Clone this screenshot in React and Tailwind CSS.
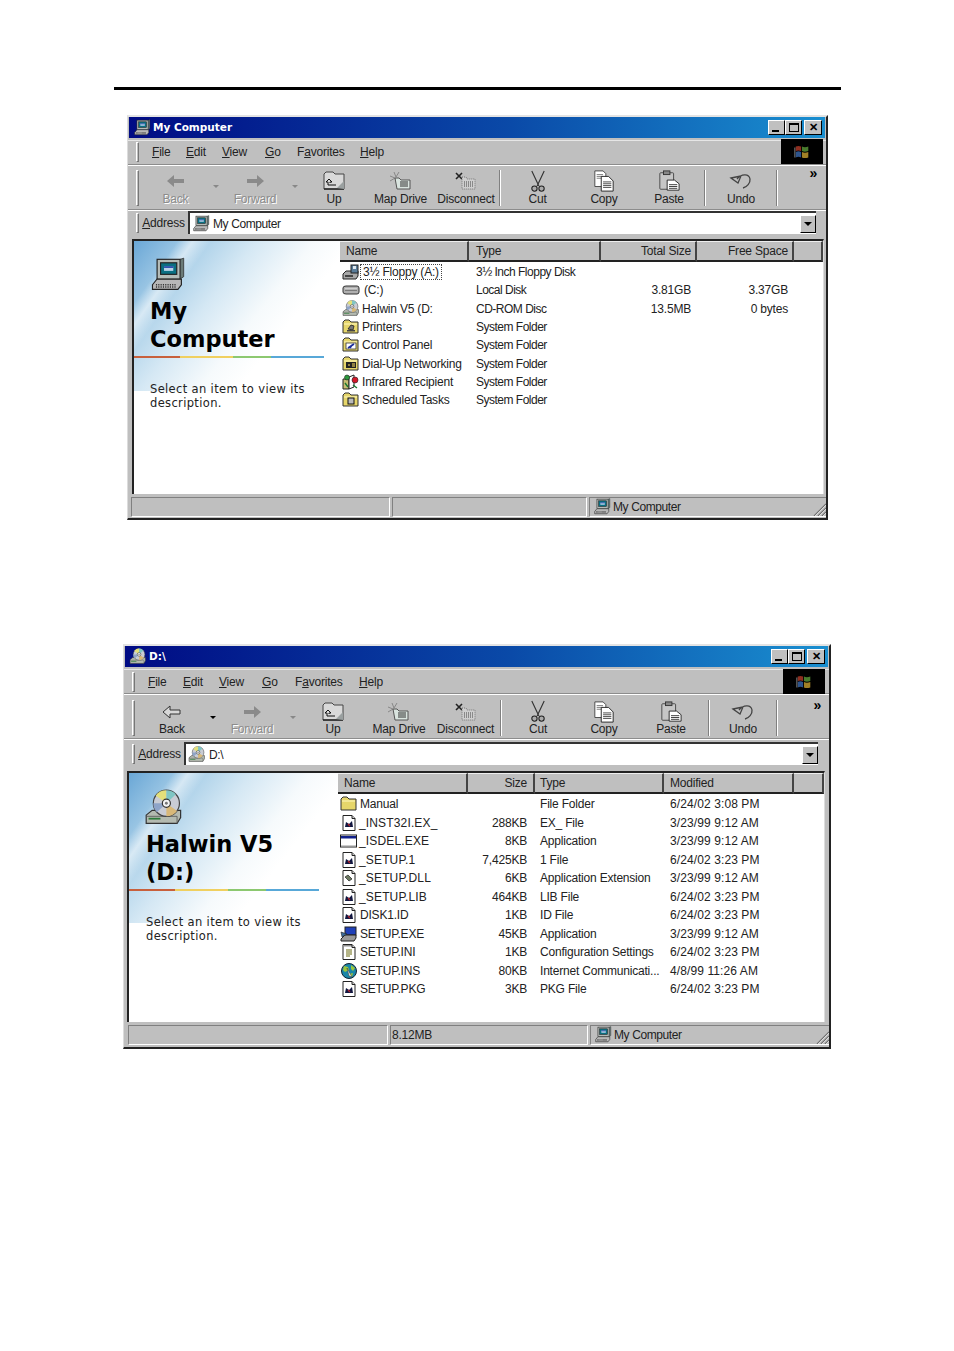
import React from "react";

const Computer = ({ className }) => (
  <svg viewBox="0 0 32 32" className={className}>
    <path d="M3 24l4-5h21v5l-3 4H3z" fill="#b8b8b8" stroke="#222" strokeWidth="1" />
    <path d="M6 26h17M6 24h17" stroke="#333" strokeWidth="1.4" strokeDasharray="1 1" />
    <rect x="7" y="2" width="20" height="17" fill="#b5bcb8" stroke="#222" />
    <path d="M27 2l3-1v16l-3 2z" fill="#6b7b78" stroke="#222" strokeWidth=".6" />
    <rect x="10" y="5" width="14" height="10" fill="#0a6f82" stroke="#222" />
    <rect x="13" y="8" width="8" height="4" fill="#b9d3e8" />
    <rect x="13" y="8" width="8" height="1.4" fill="#1c3fa8" />
  </svg>
);

const Cd = ({ className }) => (
  <svg viewBox="0 0 32 32" className={className}>
    <path d="M1 22l5-4h24v6l-3 5H1z" fill="#b4bab0" stroke="#333" />
    <path d="M3 25h10" stroke="#2d7a3a" strokeWidth="1.500" />
    <path d="M1 23h26v6" fill="none" stroke="#555" strokeWidth=".7" />
    <circle cx="18" cy="12" r="11" fill="#c9ccd4" stroke="#444" />
    <path d="M18 12L9 5.500A11 11 0 0 1 18 1z" fill="#e4e07a" />
    <path d="M18 12l0-11a11 11 0 0 1 8 3.500z" fill="#7fc6c4" />
    <path d="M18 12l9 6.500A11 11 0 0 1 18 23z" fill="#d8b878" />
    <path d="M18 12L7 12a11 11 0 0 0 3 7.500z" fill="#8ea4c8" />
    <circle cx="18" cy="12" r="3.400" fill="#f4f4f4" stroke="#333" />
    <circle cx="18" cy="12" r="1.200" fill="#777" />
  </svg>
);

const Floppy = () => (
  <svg viewBox="0 0 18 16" className="w-[18px] h-[16px]">
    <path d="M1 10l3-3h12v5l-2 3H1z" fill="#a8a8a8" stroke="#222" />
    <path d="M3 12h8" stroke="#111" strokeWidth="1.300" />
    <rect x="9" y="1" width="7" height="8" fill="#5a7d9a" stroke="#222" />
    <rect x="11" y="2" width="3" height="3" fill="#dfe8ee" />
  </svg>
);

const Drive = () => (
  <svg viewBox="0 0 18 16" className="w-[18px] h-[16px]">
    <path d="M1 6q0-2 3-2h11q2 0 2 2v4q0 2-2 2H4q-3 0-3-2z" fill="#b0b0b0" stroke="#333" />
    <path d="M3 7h12v2H3z" fill="#7b7b7b" />
    <path d="M3 7h12" stroke="#eee" />
  </svg>
);

const Folder = ({ inner }) => (
  <svg viewBox="0 0 18 16" className="w-[18px] h-[16px]">
    <path d="M1 14V3l2-2h4l2 2h7v11z" fill="#e6d66a" stroke="#333" />
    <path d="M2 5h13" stroke="#fff8c0" />
    {inner === "print" && (<><path d="M6 10l3-4 3 1-1 4z" fill="#777" stroke="#222" strokeWidth=".8" /><path d="M5 11h8v1.500H5z" fill="#444" /></>)}
    {inner === "cp" && (<><rect x="4" y="6" width="10" height="6" fill="#fff" stroke="#333" strokeWidth=".8" /><path d="M6 11l6-4M8 11l2-3" stroke="#1a2c9a" strokeWidth="1.600" /></>)}
    {inner === "dial" && (<><rect x="4" y="6" width="10" height="6" fill="#222" /><path d="M6 9h2M10 8h3M10 10h3" stroke="#ffe060" strokeWidth="1.200" /></>)}
    {inner === "task" && (<rect x="6" y="6" width="6" height="6" fill="#bbb" stroke="#111" />)}
  </svg>
);

const Infrared = () => (
  <svg viewBox="0 0 18 16" className="w-[18px] h-[16px]">
    <path d="M1 5h6v10H1z" fill="#c6bd73" stroke="#222" />
    <path d="M7 3l5-2v12l-5 2z" fill="#fff" stroke="#222" />
    <circle cx="13" cy="6" r="3" fill="#d2182a" stroke="#222" strokeWidth=".6" />
    <circle cx="5" cy="3.500" r="2.500" fill="#2b9a3d" stroke="#222" strokeWidth=".6" />
    <path d="M3 9l3 4M11 11l4 3" stroke="#1b7a30" strokeWidth="1.400" />
  </svg>
);

const Doc = ({ mark = "dark" }) => (
  <svg viewBox="0 0 18 16" className="w-[18px] h-[16px]">
    <path d="M3 .5h9l3 3v12H3z" fill="#fff" stroke="#222" />
    <path d="M12 .5v3h3" fill="#ccc" stroke="#222" />
    {mark === "dark" && (<><path d="M5 12l1-5 3 2 3-3 1 6z" fill="#10163f" /><path d="M8 9l2 2" stroke="#b0202a" strokeWidth="1.200" /></>)}
    {mark === "dll" && <path d="M5 7l3-2 4 4-3 2z" fill="#6d7a62" stroke="#222" strokeWidth=".7" />}
    {mark === "ini" && (<><path d="M5 1v1.500M7 1v1.500M9 1v1.500M11 1v1.500" stroke="#222" /><path d="M6 6h6M6 8h6M6 10h6M6 12h4" stroke="#6a6a10" strokeWidth="1.200" /></>)}
  </svg>
);

const AppWin = () => (
  <svg viewBox="0 0 18 16" className="w-[18px] h-[16px]">
    <rect x=".5" y="2" width="16" height="12" fill="#fff" stroke="#222" />
    <rect x="1" y="3" width="15" height="2.500" fill="#11208a" />
    <path d="M1 13h15" stroke="#999" />
  </svg>
);

const SetupExe = () => (
  <svg viewBox="0 0 18 16" className="w-[18px] h-[16px]">
    <rect x="5" y="1" width="11" height="8" fill="#2040b8" stroke="#222" />
    <path d="M1 13l4-4h11v3l-2 3H1z" fill="#999" stroke="#222" />
    <path d="M1 6l6 2-5 3z" fill="#3a6a9a" stroke="#222" strokeWidth=".6" />
  </svg>
);

const Globe = () => (
  <svg viewBox="0 0 18 16" className="w-[18px] h-[16px]">
    <circle cx="9" cy="8" r="7.500" fill="#1a86a8" stroke="#123" />
    <path d="M4 3l4 1 1 3-4 2-2-2zM11 2l4 3-2 3-2-2zM9 11l4-1-1 4z" fill="#9cc63c" />
    <path d="M7 5l5 9-3-1z" fill="#e8e8e8" stroke="#333" strokeWidth=".5" />
  </svg>
);

const BackArrow = ({ on }) => (
  <svg viewBox="0 0 22 18" className="w-[22px] h-[18px]">
    {on ? (
      <path d="M9 3L2 9l7 6v-4h10V7H9z" fill="#d8d8d8" stroke="#333" strokeWidth="1" />
    ) : (
      <path d="M9 3L2 9l7 6v-4h10V7H9z" fill="#8a8a8a" />
    )}
  </svg>
);
const FwdArrow = () => (
  <svg viewBox="0 0 22 18" className="w-[22px] h-[18px]">
    <path d="M13 3l7 6-7 6v-4H3V7h10z" fill="#8a8a8a" />
  </svg>
);
const UpIco = () => (
  <svg viewBox="0 0 24 20" className="w-[24px] h-[20px]">
    <path d="M2 18V3l2-2h7l2 2h9v15z" fill="#d9d9d9" stroke="#444" />
    <path d="M2 18h20" stroke="#222" strokeWidth="1.400" />
    <path d="M7 8l-3 3h2v3h8M7 8l3 3H8v1" fill="none" stroke="#111" strokeWidth="1" />
    <path d="M15 17l7-7v8z" fill="#9aa0a0" />
  </svg>
);
const MapIco = () => (
  <svg viewBox="0 0 24 20" className="w-[24px] h-[20px]">
    <path d="M5 1l2 5M1 5l5 2M10 1L7 6M1 10l5-3" stroke="#888" strokeWidth="1" />
    <path d="M6 7h4l2 2h9v9H8z" fill="#d9e4df" stroke="#555" />
    <path d="M11 11h8M11 13h8M11 15h8" stroke="#333" />
  </svg>
);
const DiscIco = () => (
  <svg viewBox="0 0 24 20" className="w-[24px] h-[20px]">
    <path d="M2 2l6 6M8 2L2 8" stroke="#222" strokeWidth="1.600" />
    <path d="M8 6h4l1 2h8v10H8z" fill="#cfcfcf" stroke="#777" strokeDasharray="1 1" />
    <path d="M10 11h10M10 13h10M10 15h10" stroke="#444" strokeDasharray="1 1" />
  </svg>
);
const CutIco = () => (
  <svg viewBox="0 0 20 26" className="w-[18px] h-[23px]">
    <path d="M3 1l8 17M17 1L9 18" stroke="#333" strokeWidth="1.300" fill="none" />
    <circle cx="6" cy="21" r="3" fill="#aaa" stroke="#222" strokeWidth="1.200" />
    <circle cx="14" cy="21" r="3" fill="#aaa" stroke="#222" strokeWidth="1.200" />
  </svg>
);
const CopyIco = () => (
  <svg viewBox="0 0 24 24" className="w-[22px] h-[22px]">
    <path d="M2 1h9l3 3v14H2z" fill="#fff" stroke="#444" />
    <path d="M4 5h7M4 7h7M4 9h7" stroke="#777" />
    <path d="M9 7h8l5 5v11H9z" fill="#fff" stroke="#222" />
    <path d="M11 13h9M11 15h9M11 17h9M11 19h9" stroke="#444" />
  </svg>
);
const PasteIco = () => (
  <svg viewBox="0 0 24 24" className="w-[22px] h-[22px]">
    <rect x="2" y="3" width="15" height="18" rx="1" fill="#c6c6c6" stroke="#444" />
    <rect x="6" y="1" width="7" height="4" fill="#888" stroke="#333" />
    <path d="M10 11h8l5 4v7H10z" fill="#fff" stroke="#222" />
    <path d="M12 16h9M12 18h9M12 20h9" stroke="#333" />
  </svg>
);
const UndoIco = () => (
  <svg viewBox="0 0 24 20" className="w-[24px] h-[20px]">
    <path d="M2 7l10-2-3 7zM8 8c4-5 12-6 13 0 .5 4-3 8-7 9" fill="none" stroke="#444" strokeWidth="1.300" />
  </svg>
);

const Flag = () => (
  <svg viewBox="0 0 20 20" className="w-[18px] h-[18px] opacity-80">
    <path d="M3 4q3-1.500 6 0v5q-3-1.500-6 0z" fill="#b23a28" />
    <path d="M10 4q3 1.500 7 0v5q-4 1.500-7 0z" fill="#5a9a3a" />
    <path d="M3 10q3-1.500 6 0v6q-3-1.500-6 0z" fill="#3a6ab0" />
    <path d="M10 10q3 1.500 7 0v6q-4 1.500-7 0z" fill="#c8a030" />
    <path d="M2 5v11" stroke="#777" strokeWidth="1.500" />
  </svg>
);

const U = ({ children }) => <span className="underline underline-offset-1">{children}</span>;

const Grip = ({ h }) => (
  <div className={`w-[3px] shrink-0 border-l border-t border-white border-r border-b border-r-[#777] border-b-[#777] ${h}`} />
);

const Sep = () => <div className="w-[2px] h-[36px] shrink-0 border-l border-[#808080] border-r border-r-white" />;

const TBtn = ({ w, label, disabled, children }) => (
  <div className={`flex flex-col items-center justify-between h-[36px] shrink-0 ${w}`}>
    <div className="h-[23px] flex items-center justify-center">{children}</div>
    <span className={`leading-[13px] whitespace-nowrap ${disabled ? "text-[#8c8c8c] [text-shadow:1px_1px_0_#fff]" : ""}`}>{label}</span>
  </div>
);

const Drop = ({ w, dark }) => (
  <div className={`shrink-0 flex justify-center pb-[2px] ${w}`}>
    <div className={`w-0 h-0 border-x-[3px] border-x-transparent border-t-[3px] ${dark ? "border-t-black" : "border-t-[#888]"}`} />
  </div>
);

const WinBtn = ({ children, className = "" }) => (
  <div className={`w-[17px] h-[15px] bg-[#c0c0c0] border border-t-white border-l-white border-r-black border-b-black flex items-center justify-center ${className}`}>
    {children}
  </div>
);

const SKY =
  "bg-no-repeat bg-[size:100%_150px] bg-[linear-gradient(125deg,transparent_0%,transparent_14%,rgba(255,255,255,.55)_19%,transparent_25%,transparent_100%),linear-gradient(128deg,#6aa7d6_0%,#a9cfe8_20%,#d5e8f4_38%,#f6fafc_56%,#ffffff_68%)]";

function Window({ cfg }) {
  return (
    <div className={`bg-[#bfbfbf] border-t-2 border-l border-t-[#e4e4e4] border-l-[#dcdcdc] border-r-2 border-b-2 border-r-[#222] border-b-[#222] flex flex-col font-['Liberation_Sans',sans-serif] text-[12px] tracking-[-0.2px] text-[#222] ${cfg.outer}`}>
      {/* title */}
      <div className="h-[21px] mx-[1px] flex items-center bg-[linear-gradient(90deg,#000b84_0%,#0a4aa8_55%,#1a8fd0_100%)] pl-[4px] pr-[3px] shrink-0">
        {cfg.titleIcon}
        <span className="ml-[2px] text-white font-bold font-['DejaVu_Sans',sans-serif] text-[10.500px] tracking-normal">{cfg.title}</span>
        <div className="ml-auto flex items-center">
          <WinBtn><div className="w-[7px] h-[2px] bg-black mt-[7px] mr-[2px]" /></WinBtn>
          <WinBtn><div className="w-[10px] h-[9px] border border-black border-t-2" /></WinBtn>
          <WinBtn className="ml-[2px] w-[18px]"><span className="text-[11px] leading-none font-bold text-black">✕</span></WinBtn>
        </div>
      </div>
      {/* menu */}
      <div className={`mt-[2px] h-[25px] flex items-center pl-[8px] shrink-0 border-b border-b-[#8c8c8c] border-t border-t-[#e6e6e6] ${cfg.menuPad}`}>
        <Grip h="h-[20px]" />
        <div className="flex items-center text-[12px]">
          {cfg.menu.map(([pad, node], i) => (
            <div key={i} className={`whitespace-nowrap ${pad}`}>{node}</div>
          ))}
        </div>
        <div className={`ml-auto h-[25px] bg-black flex items-center justify-center ${cfg.logo}`}>
          <Flag />
        </div>
      </div>
      {/* toolbar */}
      <div className={`h-[45px] flex items-center pl-[8px] shrink-0 border-t border-t-white border-b border-b-[#8c8c8c] ${cfg.toolPad}`}>
        <Grip h="h-[36px]" />
        <div className="flex items-center">{cfg.tools}</div>
        <div className={`ml-auto self-start pt-[0px] text-[14px] font-bold leading-[14px] text-black ${cfg.moreR}`}>»</div>
      </div>
      {/* address */}
      <div className={`h-[26px] flex items-center pl-[8px] shrink-0 border-t border-t-white ${cfg.addrPad}`}>
        <Grip h="h-[20px]" />
        <div className={`text-center shrink-0 ${cfg.addrW}`}><U>A</U>ddress</div>
        <div className={`h-[23px] bg-white border-t-2 border-l-2 border-t-[#333] border-l-[#333] flex items-center shrink-0 pl-[2px] ${cfg.addrField}`}>
          {cfg.addrIcon}
          <span className="ml-[3px] tracking-[-0.4px]">{cfg.addrText}</span>
          <div className="ml-auto w-[16px] h-[18px] bg-[#c0c0c0] border border-t-white border-l-white border-r-black border-b-black flex items-center justify-center">
            <div className="w-0 h-0 border-x-[4px] border-x-transparent border-t-[4px] border-t-black" />
          </div>
        </div>
      </div>
      {/* content */}
      <div className={`flex bg-white border-t-2 border-l-2 border-t-[#222] border-l-[#222] border-r border-r-[#ddd] overflow-hidden shrink-0 ${cfg.content}`}>
        <div className={`shrink-0 ${SKY} ${cfg.sideW}`}>
          <div className={cfg.sideIconBox}>{cfg.sideIcon}</div>
          <div className={`mt-[3px] font-['DejaVu_Sans',sans-serif] font-bold text-[22.500px] leading-[28px] tracking-normal text-black ${cfg.headMl}`}>
            {cfg.heading.map((h) => (<div key={h}>{h}</div>))}
          </div>
          <div className="mt-[3px] w-[190px] h-[2px] bg-[linear-gradient(90deg,#c8603c_0_24%,#f0d060_24%_52%,#8cc870_52%_72%,#58a8d8_72%_100%)]" />
          <div className={`mt-[24px] font-['DejaVu_Sans',sans-serif] text-[11.500px] leading-[14px] tracking-[0.35px] text-[#222] ${cfg.descMl}`}>
            Select an item to view its<br />description.
          </div>
        </div>
        <div className="flex-1 min-w-0">
          <div className={`grid h-[20px] ${cfg.cols}`}>
            {cfg.headers.map(([t, cls], i) => (
              <div key={i} className={`bg-[#bfbfbf] border-r-2 border-r-[#444] border-b-2 border-b-[#222] border-t border-t-[#eee] leading-[18px] ${cls}`}>{t}</div>
            ))}
          </div>
          <div className="pt-[2px]">
            {cfg.rows.map((r, i) => (
              <div key={i} className={`grid items-center ${cfg.rowH} ${cfg.cols}`}>
                {r.map((c, j) => (
                  <div key={j} className={`whitespace-nowrap ${cfg.cells[j]}`}>{c}</div>
                ))}
              </div>
            ))}
          </div>
        </div>
      </div>
      {/* status */}
      <div className="mt-[3px] h-[20px] flex shrink-0 items-stretch">
        <div className={`border-t border-l border-t-[#808080] border-l-[#808080] border-r border-b border-r-white border-b-white shrink-0 ${cfg.st1}`} />
        <div className={`ml-[2px] pl-[1px] leading-[18px] border-t border-l border-t-[#808080] border-l-[#808080] border-r border-b border-r-white border-b-white shrink-0 ${cfg.st2}`}>{cfg.status}</div>
        <div className="ml-[2px] flex-1 flex items-center pl-[3px] border-t border-l border-t-[#808080] border-l-[#808080] border-b border-b-white">
          <Computer className="w-[18px] h-[18px]" />
          <span className="ml-[2px] tracking-[-0.4px]">My Computer</span>
          <svg viewBox="0 0 14 14" className="ml-auto w-[14px] h-[14px] self-end">
            <path d="M2 14L14 2M6 14l8-8M10 14l4-4" stroke="#6f6f6f" strokeWidth="1.200" />
            <path d="M3 14L14 3M7 14l7-7M11 14l3-3" stroke="#fff" strokeWidth=".6" />
          </svg>
        </div>
      </div>
    </div>
  );
}

const Name = ({ icon, gap = "ml-[2px]", children, boxed, wide }) => (
  <div className="flex items-center">
    {icon}
    <span className={`${gap} ${wide ? "tracking-[0.15px]" : ""} ${boxed ? "border border-dotted border-[#444] px-[2px] leading-[14px]" : ""}`}>{children}</span>
  </div>
);

const FileIco = (m) => <Doc mark={m} />;

const win1 = {
  outer: "ml-[127px] w-[701px] h-[405px] mt-[25px]",
  title: "My Computer",
  titleIcon: <Computer className="w-[18px] h-[18px]" />,
  menuPad: "pb-[2px]",
  addrPad: "pb-[2px]",
  toolPad: "",
  moreR: "pr-[9px]",
  menu: [
    ["pl-[13px] w-[47px]", <><U>F</U>ile</>],
    ["pl-0 w-[36px]", <><U>E</U>dit</>],
    ["pl-0 w-[43px]", <><U>V</U>iew</>],
    ["pl-0 w-[32px]", <><U>G</U>o</>],
    ["pl-0 w-[63px]", <>F<U>a</U>vorites</>],
    ["pl-0", <><U>H</U>elp</>],
  ],
  logo: "w-[42px] mr-[3px]",
  tools: (
    <>
      <TBtn w="w-[73px]" label="Back" disabled><BackArrow /></TBtn>
      <Drop w="w-[8px]" />
      <TBtn w="w-[70px]" label="Forward" disabled><FwdArrow /></TBtn>
      <Drop w="w-[10px]" />
      <TBtn w="w-[68px]" label="Up"><UpIco /></TBtn>
      <TBtn w="w-[65px]" label="Map Drive"><MapIco /></TBtn>
      <TBtn w="w-[66px]" label="Disconnect"><DiscIco /></TBtn>
      <Sep />
      <TBtn w="w-[73px]" label="Cut"><CutIco /></TBtn>
      <TBtn w="w-[60px]" label="Copy"><CopyIco /></TBtn>
      <TBtn w="w-[70px]" label="Paste"><PasteIco /></TBtn>
      <Sep />
      <TBtn w="w-[70px]" label="Undo"><UndoIco /></TBtn>
      <Sep />
    </>
  ),
  addrW: "w-[49px]",
  addrField: "w-[628px] ml-0",
  addrIcon: <Computer className="w-[18px] h-[18px]" />,
  addrText: "My Computer",
  content: "h-[255px] ml-[4px] mr-[2px] mt-[3px]",
  sideW: "w-[206px]",
  sideIconBox: "pl-[15px] pt-[16px]",
  sideIcon: <Computer className="w-[37px] h-[37px]" />,
  headMl: "ml-[16px]",
  descMl: "ml-[16px]",
  heading: ["My", "Computer"],
  cols: "grid-cols-[129px_132px_96px_97px_1fr]",
  rowH: "h-[18.300px]",
  cells: ["pl-[2px]", "pl-[7px] tracking-[-0.5px]", "text-right pr-[6px]", "text-right pr-[6px]", ""],
  headers: [
    ["Name", "pl-[6px]"],
    ["Type", "pl-[7px]"],
    ["Total Size", "text-right pr-[4px]"],
    ["Free Space", "text-right pr-[4px]"],
    ["", ""],
  ],
  rows: [
    [<Name icon={<Floppy />} boxed gap="ml-0">3½ Floppy (A:)</Name>, "3½ Inch Floppy Disk", "", "", ""],
    [<Name icon={<Drive />} gap="ml-[4px]">(C:)</Name>, "Local Disk", "3.81GB", "3.37GB", ""],
    [<Name icon={<Cd className="w-[18px] h-[17px]" />}>Halwin V5 (D:</Name>, "CD-ROM Disc", "13.5MB", "0 bytes", ""],
    [<Name icon={<Folder inner="print" />}>Printers</Name>, "System Folder", "", "", ""],
    [<Name icon={<Folder inner="cp" />}>Control Panel</Name>, "System Folder", "", "", ""],
    [<Name icon={<Folder inner="dial" />}>Dial-Up Networking</Name>, "System Folder", "", "", ""],
    [<Name icon={<Infrared />}>Infrared Recipient</Name>, "System Folder", "", "", ""],
    [<Name icon={<Folder inner="task" />}>Scheduled Tasks</Name>, "System Folder", "", "", ""],
  ],
  status: "",
  st1: "w-[259px] ml-[3px]",
  st2: "w-[195px]",
};

const win2 = {
  outer: "ml-[123px] w-[708px] h-[405px] mt-[124px]",
  title: "D:\\",
  titleIcon: <Cd className="w-[18px] h-[17px]" />,
  menuPad: "",
  addrPad: "pt-[2px]",
  toolPad: "pt-[3px]",
  moreR: "pr-[8px]",
  menu: [
    ["pl-[13px] w-[48px]", <><U>F</U>ile</>],
    ["w-[36px]", <><U>E</U>dit</>],
    ["w-[43px]", <><U>V</U>iew</>],
    ["w-[33px]", <><U>G</U>o</>],
    ["w-[64px]", <>F<U>a</U>vorites</>],
    ["", <><U>H</U>elp</>],
  ],
  logo: "w-[42px] mr-[4px]",
  tools: (
    <>
      <TBtn w="w-[74px]" label="Back"><BackArrow on /></TBtn>
      <Drop w="w-[8px]" dark />
      <TBtn w="w-[70px]" label="Forward" disabled><FwdArrow /></TBtn>
      <Drop w="w-[12px]" />
      <TBtn w="w-[68px]" label="Up"><UpIco /></TBtn>
      <TBtn w="w-[64px]" label="Map Drive"><MapIco /></TBtn>
      <TBtn w="w-[69px]" label="Disconnect"><DiscIco /></TBtn>
      <Sep />
      <TBtn w="w-[72px]" label="Cut"><CutIco /></TBtn>
      <TBtn w="w-[60px]" label="Copy"><CopyIco /></TBtn>
      <TBtn w="w-[74px]" label="Paste"><PasteIco /></TBtn>
      <Sep />
      <TBtn w="w-[66px]" label="Undo"><UndoIco /></TBtn>
      <Sep />
    </>
  ),
  addrW: "w-[49px]",
  addrField: "w-[634px]",
  addrIcon: <Cd className="w-[18px] h-[17px]" />,
  addrText: "D:\\",
  content: "h-[251px] ml-[3px] mr-[4px] mt-[6px]",
  sideW: "w-[209px]",
  sideIconBox: "pl-[16px] pt-[16px]",
  sideIcon: <Cd className="w-[38px] h-[38px]" />,
  headMl: "ml-[17px]",
  descMl: "ml-[17px]",
  heading: ["Halwin V5", "(D:)"],
  cols: "grid-cols-[130px_67px_129px_130px_1fr]",
  rowH: "h-[18.500px]",
  cells: ["pl-[2px]", "text-right pr-[8px]", "pl-[5px]", "pl-[6px] tracking-[0.1px]", ""],
  headers: [
    ["Name", "pl-[6px]"],
    ["Size", "text-right pr-[6px]"],
    ["Type", "pl-[5px]"],
    ["Modified", "pl-[6px]"],
    ["", ""],
  ],
  rows: [
    [<Name icon={<Folder />}>Manual</Name>, "", "File Folder", "6/24/02 3:08 PM"],
    [<Name icon={FileIco()} wide gap="ml-[1px]">_INST32I.EX_</Name>, "288KB", "EX_ File", "3/23/99 9:12 AM"],
    [<Name icon={<AppWin />} wide gap="ml-[1px]">_ISDEL.EXE</Name>, "8KB", "Application", "3/23/99 9:12 AM"],
    [<Name icon={FileIco()} wide gap="ml-[1px]">_SETUP.1</Name>, "7,425KB", "1 File", "6/24/02 3:23 PM"],
    [<Name icon={FileIco("dll")} wide gap="ml-[1px]">_SETUP.DLL</Name>, "6KB", "Application Extension", "3/23/99 9:12 AM"],
    [<Name icon={FileIco()} wide gap="ml-[1px]">_SETUP.LIB</Name>, "464KB", "LIB File", "6/24/02 3:23 PM"],
    [<Name icon={FileIco()}>DISK1.ID</Name>, "1KB", "ID File", "6/24/02 3:23 PM"],
    [<Name icon={<SetupExe />}>SETUP.EXE</Name>, "45KB", "Application", "3/23/99 9:12 AM"],
    [<Name icon={FileIco("ini")}>SETUP.INI</Name>, "1KB", "Configuration Settings", "6/24/02 3:23 PM"],
    [<Name icon={<Globe />}>SETUP.INS</Name>, "80KB", "Internet Communicati...", "4/8/99 11:26 AM"],
    [<Name icon={FileIco()}>SETUP.PKG</Name>, "3KB", "PKG File", "6/24/02 3:23 PM"],
  ],
  status: "8.12MB",
  st1: "w-[260px] ml-[4px]",
  st2: "w-[198px]",
};

export default function App() {
  return (
    <div className="w-[954px] h-[1351px] bg-white pt-[87px] overflow-hidden">
      <div className="ml-[114px] w-[727px] h-[3px] bg-black" />
      <Window cfg={win1} />
      <Window cfg={win2} />
    </div>
  );
}
